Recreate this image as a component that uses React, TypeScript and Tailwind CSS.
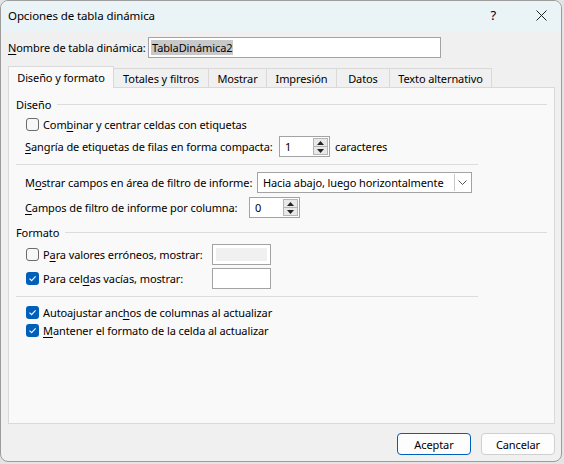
import React from "react";

const font = { fontFamily: '"Noto Sans", "Open Sans", sans-serif' };

function Check({ checked }: { checked: boolean }) {
  if (checked) {
    return (
      <span className="flex h-[13px] w-[13px] shrink-0 items-center justify-center rounded-[3px] bg-[#005fb8]">
        <svg width="9" height="9" viewBox="0 0 9 9">
          <path d="M1.5 4.6 L3.6 6.6 L7.6 2.4" fill="none" stroke="white" strokeWidth="1.1" />
        </svg>
      </span>
    );
  }
  return <span className="block h-[13px] w-[13px] shrink-0 rounded-[3px] border border-[#6b6b6b] bg-[#f7f7f7]" />;
}

function Spin({ value }: { value: string }) {
  return (
    <div className="flex h-[21px] w-[51px] items-stretch border border-[#a3a3a3] bg-white">
      <div className="flex flex-1 items-center pl-[5px]">{value}</div>
      <div className="my-[1px] mr-[1px] flex w-[15px] flex-col border border-[#b5b5b5] bg-[#e8e8e8]">
        <div className="flex flex-1 items-center justify-center border-b border-[#b5b5b5]">
          <svg width="7" height="4" viewBox="0 0 7 4"><path d="M0 4 L3.5 0 L7 4 Z" fill="#222" /></svg>
        </div>
        <div className="flex flex-1 items-center justify-center">
          <svg width="7" height="4" viewBox="0 0 7 4"><path d="M0 0 L3.5 4 L7 0 Z" fill="#222" /></svg>
        </div>
      </div>
    </div>
  );
}

export default function App() {
  return (
    <div className="h-[464px] w-[564px] whitespace-nowrap bg-[#e4e4e4] text-[11px] leading-none tracking-[-0.1px] text-black" style={font}>
      <div className="flex h-[462px] w-[562px] flex-col overflow-hidden rounded-[8px] border border-[#9c9c9c] bg-[#f0f0f0]">
        {/* title bar */}
        <div className="flex h-[30px] shrink-0 items-center bg-[#eaf3f5] pb-[1px] pl-[7px]">
          <span className="flex-1 text-[11.5px]">Opciones de tabla dinámica</span>
          <span className="mr-[40px] text-[13px]">?</span>
          <svg className="mr-[14px]" width="11" height="11" viewBox="0 0 11 11">
            <path d="M0.5 0.5 L10.5 10.5 M10.5 0.5 L0.5 10.5" stroke="#222" strokeWidth="1" />
          </svg>
        </div>

        {/* body */}
        <div className="flex flex-1 flex-col pl-[7px] pr-[6px]">
          <div className="mt-[6px] flex h-[21px] items-center">
            <span className="w-[140px] shrink-0">
              <u className="underline-offset-2">N</u>ombre de tabla dinámica:
            </span>
            <div className="flex h-[21px] w-[293px] items-center border border-[#a3a3a3] bg-white pl-[2px]">
              <span className="bg-[#c8c8c8] px-[1px] py-[2px]">TablaDinámica2</span>
            </div>
          </div>

          {/* tabs */}
          <div className="mt-[8px] flex h-[21px] items-end">
            <div className="relative -mb-[1px] flex h-[22px] w-[106px] items-center justify-center border border-b-0 border-[#d9d9d9] bg-[#f9f9f9]">
              Diseño y formato
            </div>
            <div className="flex h-[19px] w-[95px] items-center justify-center border-r border-t border-[#d9d9d9]">Totales y filtros</div>
            <div className="flex h-[19px] w-[58px] items-center justify-center border-r border-t border-[#d9d9d9]">Mostrar</div>
            <div className="flex h-[19px] w-[70px] items-center justify-center border-r border-t border-[#d9d9d9]">Impresión</div>
            <div className="flex h-[19px] w-[53px] items-center justify-center border-r border-t border-[#d9d9d9]">Datos</div>
            <div className="flex h-[19px] w-[102px] items-center justify-center border-r border-t border-[#d9d9d9]">Texto alternativo</div>
          </div>

          {/* panel */}
          <div className="flex h-[337px] w-[547px] flex-col border border-[#d9d9d9] bg-[#f9f9f9] pl-[7px] pr-[7px]">
            <div className="mt-[8px] flex h-[16px] items-center">
              <span>Diseño</span>
              <div className="ml-[6px] h-px flex-1 bg-[#dcdcdc]" />
            </div>
            <div className="mt-[4px] flex h-[16px] items-center pl-[10px]">
              <Check checked={false} />
              <span className="ml-[4px]">Com<u className="underline-offset-2">b</u>inar y centrar celdas con etiquetas</span>
            </div>
            <div className="mt-[4px] flex h-[21px] items-center pl-[9px]">
              <span className="w-[254px] shrink-0"><u className="underline-offset-2">S</u>angría de etiquetas de filas en forma compacta:</span>
              <Spin value="1" />
              <span className="ml-[5px]">caracteres</span>
            </div>
            <div className="mt-[7px] h-px w-[462px] bg-[#dcdcdc]" />
            <div className="mt-[7px] flex h-[21px] items-center pl-[9px]">
              <span className="w-[232px] shrink-0">M<u className="underline-offset-2">o</u>strar campos en área de filtro de informe:</span>
              <div className="flex h-[21px] w-[215px] items-stretch border border-[#a3a3a3] bg-white">
                <div className="flex flex-1 items-center pl-[5px]">Hacia abajo, luego horizontalmente</div>
                <div className="my-[1px] mr-[1px] flex w-[16px] items-center justify-center border-l border-[#c8c8c8]">
                  <svg width="9" height="5" viewBox="0 0 9 5"><path d="M0.5 0.5 L4.5 4.5 L8.5 0.5" fill="none" stroke="#555" strokeWidth="1" /></svg>
                </div>
              </div>
            </div>
            <div className="mt-[4px] flex h-[21px] items-center pl-[9px]">
              <span className="w-[224px] shrink-0"><u className="underline-offset-2">C</u>ampos de filtro de informe por columna:</span>
              <Spin value="0" />
            </div>
            <div className="mt-[6px] flex h-[16px] items-center">
              <span>Formato</span>
              <div className="ml-[6px] h-px flex-1 bg-[#dcdcdc]" />
            </div>
            <div className="mt-[4px] flex h-[21px] items-center pl-[10px]">
              <div className="flex w-[186px] shrink-0 items-center">
                <Check checked={false} />
                <span className="ml-[4px]">P<u className="underline-offset-2">a</u>ra valores erróneos, mostrar:</span>
              </div>
              <div className="h-[21px] w-[59px] border border-[#a3a3a3] bg-white p-[3px]">
                <div className="h-full w-full bg-[#f0f0f0]" />
              </div>
            </div>
            <div className="mt-[3px] flex h-[21px] items-center pl-[10px]">
              <div className="flex w-[186px] shrink-0 items-center">
                <Check checked={true} />
                <span className="ml-[4px]">Para cel<u className="underline-offset-2">d</u>as vacías, mostrar:</span>
              </div>
              <div className="h-[21px] w-[59px] border border-[#a3a3a3] bg-white" />
            </div>
            <div className="mt-[7px] h-px w-[462px] bg-[#dcdcdc]" />
            <div className="mt-[7px] flex h-[16px] items-center pl-[10px]">
              <Check checked={true} />
              <span className="ml-[4px]">Autoajustar anc<u className="underline-offset-2">h</u>os de columnas al actualizar</span>
            </div>
            <div className="mt-[2px] flex h-[16px] items-center pl-[10px]">
              <Check checked={true} />
              <span className="ml-[4px]"><u className="underline-offset-2">M</u>antener el formato de la celda al actualizar</span>
            </div>
          </div>

          {/* buttons */}
          <div className="mt-[9px] flex justify-end gap-[10px]">
            <button className="h-[22px] w-[74px] rounded-[4px] border border-[#005fb8] bg-[#fdfdfd]">Aceptar</button>
            <button className="h-[22px] w-[74px] rounded-[4px] border border-[#d0d0d0] bg-[#fdfdfd]">Cancelar</button>
          </div>
        </div>
      </div>
    </div>
  );
}
